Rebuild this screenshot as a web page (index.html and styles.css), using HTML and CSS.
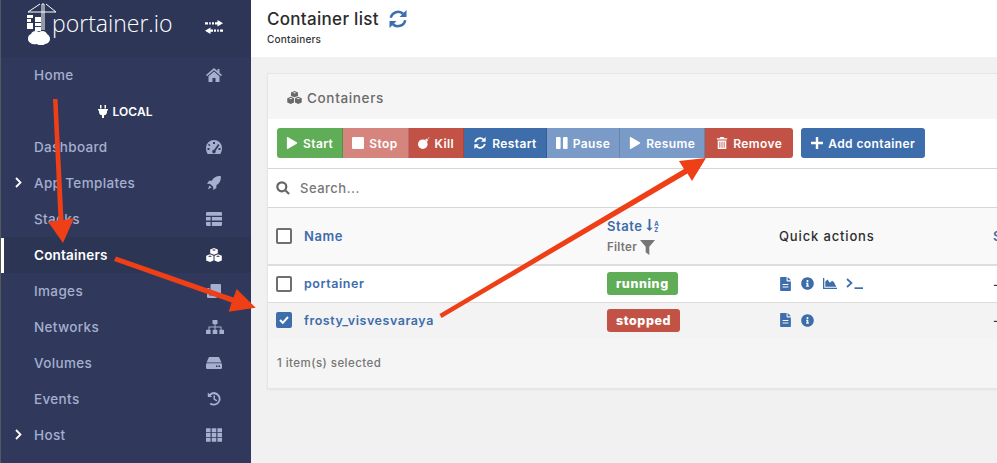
FILE: index.html
```html
<!DOCTYPE html>
<html lang="en">
<head>
<meta charset="utf-8">
<title>Container list</title>
<link rel="stylesheet" href="styles.css">
</head>
<body>
<svg class="defs" width="0" height="0" aria-hidden="true">
  <symbol id="i-home" viewBox="0 0 16 14"><path d="M8 0 0 7l1 1.2 7-5.9 7 5.9L16 7l-2.5-2.2V1h-2v2.1z"/><path d="M8 3.6 2.5 8.2V14h4v-4h3v4h4V8.2z"/></symbol>
  <symbol id="i-gauge" viewBox="0 0 16 14"><path fill-rule="evenodd" d="M8 0a8 8 0 0 0-8 8c0 2.300.7 4.400 1.700 6h12.600c1-1.600 1.700-3.700 1.700-6a8 8 0 0 0-8-8zM7 2h2v2H7zM3 3.800l1.400 1.400-1 1L2 4.800zM12.200 4l1.300 1L9.600 10.800a1.800 1.800 0 1 1-1.500-1zM1.500 8h2v2h-2zM12.500 8h2v2h-2z"/></symbol>
  <symbol id="i-rocket" viewBox="0 0 16 16"><path d="M15.800.2c-4.500-.5-8 1.200-10.300 5.100H2.400L0 8.800l3.600.2 3.400 3.400.2 3.600 3.500-2.400v-3.100C14.600 8.200 16.300 4.700 15.800.2z"/><path d="M2.800 10.800 1 15l4.200-1.800z"/></symbol>
  <symbol id="i-table" viewBox="0 0 15 13"><path d="M1 0h13a1 1 0 0 1 1 1v2.500H0V1a1 1 0 0 1 1-1zM0 4.700h4.300v3.300H0zM5.500 4.700H15v3.300H5.500zM0 9.200h4.300V13H1a1 1 0 0 1-1-1zM5.500 9.200H15V12a1 1 0 0 1-1 1H5.500z"/></symbol>
  <symbol id="i-cubes" viewBox="0 0 16 14"><path fill-rule="evenodd" d="M8 0l3.800 1.500v3.800L8 6.800 4.200 5.300V1.500zM8 1.300 6 2l2 .8 2-.8zM4 6.300l3.500 1.400v4.800L4 14 .2 12.500V7.700zM4 7.500l-2 .7 2 .8 2-.8zM12 6.300l3.800 1.400v4.800L12 14l-3.500-1.500V7.700zM12 7.500l-2 .7 2 .8 2-.8z"/></symbol>
  <symbol id="i-clone" viewBox="0 0 14 14"><rect x="3.500" y="0" width="10.500" height="10.500" rx="1"/><path d="M0 5a1 1 0 0 1 1-1h1.500v7.500H10V13a1 1 0 0 1-1 1H1a1 1 0 0 1-1-1z"/></symbol>
  <symbol id="i-sitemap" viewBox="0 0 18 14"><rect x="6.500" y="0" width="5" height="4.200" rx=".6"/><path d="M8.500 4h1v2.500h6V10h-1V7.500h-5V10h-1V7.500h-5V10h-1V6.500h6z"/><rect x="0" y="9.800" width="4.600" height="4.200" rx=".6"/><rect x="6.700" y="9.800" width="4.600" height="4.200" rx=".6"/><rect x="13.400" y="9.800" width="4.600" height="4.200" rx=".6"/></symbol>
  <symbol id="i-hdd" viewBox="0 0 16 12"><path d="M3 0h10l2.500 5.500h-15z"/><path fill-rule="evenodd" d="M1.200 6.300h13.600A1.200 1.200 0 0 1 16 7.500v3.300a1.200 1.200 0 0 1-1.200 1.200H1.200A1.200 1.200 0 0 1 0 10.800V7.500a1.200 1.200 0 0 1 1.200-1.200zM10 8.400h1.500v1.500H10zM12.500 8.400H14v1.500h-1.500z"/></symbol>
  <symbol id="i-history" viewBox="0 0 14 14"><path d="M7.300 0A6.800 6.800 0 0 0 2.400 2.100L.8.600V5h4.400L3.700 3.500a4.800 4.800 0 1 1 .1 7.200l-1.200 1.500A6.800 6.800 0 1 0 7.300 0z"/><path d="M6.500 3.500H8v3.300l2.300 1.400-.8 1.200-3-1.800z"/></symbol>
  <symbol id="i-grid" viewBox="0 0 14 12"><path d="M0 0h4v3.500H0zM5 0h4v3.500H5zM10 0h4v3.500h-4zM0 4.300h4v3.500H0zM5 4.300h4v3.500H5zM10 4.300h4v3.500h-4zM0 8.500h4V12H0zM5 8.500h4V12H5zM10 8.500h4V12h-4z"/></symbol>
  <symbol id="i-plug" viewBox="0 0 10 13"><path d="M2 0h1.500v3.500H2zM6.500 0H8v3.500H6.500zM0 4h10v1.500H9V7a3.400 3.400 0 0 1-3 3.300V13H4v-2.700A3.400 3.400 0 0 1 1 7V5.500H0z"/></symbol>
  <symbol id="i-swap" viewBox="0 0 18 14"><path d="M12.500 0 18 3.300l-5.500 3.200V4.400H10V2.300h2.500zM0 2.300h3v2.100H0zM4.200 2.300h1.600v2.100H4.200zM7 2.300h2v2.100H7z"/><path d="M5.500 7.500v2.100H8v2.100H5.500V14L0 10.700zM9 9.600h2v2.100H9zM12.200 9.600h1.600v2.100h-1.600zM15 9.600h3v2.100h-3z"/></symbol>
  <symbol id="i-refresh" viewBox="0 0 18 18"><path fill="none" stroke="currentColor" stroke-width="2.600" d="M1.800 7.800A7.400 7.400 0 0 1 14.300 4M16.200 10.200A7.400 7.400 0 0 1 3.700 14"/><path d="M17.500 0v7h-7zM.5 18v-7h7z"/></symbol>
  <symbol id="i-play" viewBox="0 0 12 14"><path d="M0 1v12a1 1 0 0 0 1.500.8l10-6a1 1 0 0 0 0-1.600l-10-6A1 1 0 0 0 0 1z"/></symbol>
  <symbol id="i-stop" viewBox="0 0 12 12"><rect width="12" height="12" rx="1.200"/></symbol>
  <symbol id="i-pause" viewBox="0 0 12 12"><rect width="4.600" height="12" rx="1"/><rect x="7" width="4.600" height="12" rx="1"/></symbol>
  <symbol id="i-bomb" viewBox="0 0 14 14"><circle cx="5.600" cy="8.400" r="5.600"/><path d="m8.500 3.300 1.500-1.500 2 2-1.500 1.500z"/><path d="M11.500 1.500 12.800.2l.6.6-1.300 1.300z"/></symbol>
  <symbol id="i-trash" viewBox="0 0 12 14"><path fill-rule="evenodd" d="M4 0h4l.7 1.500H12V3H0V1.500h3.300zM1 4h10v9a1 1 0 0 1-1 1H2a1 1 0 0 1-1-1zM3 5.500V12.500h1V5.500zM5.500 5.500V12.500h1V5.500zM8 5.500V12.500h1V5.500z"/></symbol>
  <symbol id="i-plus" viewBox="0 0 12 12"><path d="M4.800 0h2.400v4.800H12v2.400H7.200V12H4.800V7.200H0V4.800h4.800z"/></symbol>
  <symbol id="i-search" viewBox="0 0 14 14"><circle cx="5.800" cy="5.800" r="4.500" fill="none" stroke="currentColor" stroke-width="2.200"/><path d="m8.800 10.300 1.500-1.500 3.500 3.500-1.500 1.500z"/></symbol>
  <symbol id="i-down" viewBox="0 0 7 13"><path d="M2.500 0h2v9.500H7L3.500 13 0 9.500h2.500z"/></symbol>
  <symbol id="i-filter" viewBox="0 0 14 14"><path d="M0 0h14L8.700 6.300V14L5.300 11.500V6.300z"/></symbol>
  <symbol id="i-file" viewBox="0 0 10 13"><path fill-rule="evenodd" d="M0 .6A.6.600 0 0 1 .6 0H6v3.500a.6.600 0 0 0 .6.600H10v8.300a.6.600 0 0 1-.6.600H.6a.6.600 0 0 1-.6-.6zM2.300 6.500v1h5.400v-1zM2.300 8.800v1h5.400v-1z"/><path d="M7 0l3 3H7z"/></symbol>
  <symbol id="i-info" viewBox="0 0 512 512"><path d="M256 8C119 8 8 119.100 8 256c0 137 111 248 248 248s248-111 248-248C504 119.100 393 8 256 8zm0 110c23.200 0 42 18.800 42 42s-18.800 42-42 42-42-18.800-42-42 18.800-42 42-42zm56 254c0 6.600-5.400 12-12 12h-88c-6.600 0-12-5.400-12-12v-24c0-6.600 5.400-12 12-12h12v-64h-12c-6.600 0-12-5.400-12-12v-24c0-6.600 5.400-12 12-12h64c6.600 0 12 5.400 12 12v100h12c6.600 0 12 5.400 12 12v24z"/></symbol>
  <symbol id="i-area" viewBox="0 0 14 11"><path d="M0 0h1.300v9.700H14V11H0z"/><path d="M2.300 8.800V3.500L4.500 1.500l2.300 3.300 2.400-2 1.800 1.500 2.300 4.500z"/></symbol>
  <symbol id="i-term" viewBox="0 0 17 11"><path fill="none" stroke="currentColor" stroke-width="1.700" d="m1 1 4.500 4L1 9"/><path d="M8.500 9.300H17V11H8.500z"/></symbol>
  <symbol id="i-check" viewBox="0 0 10 8"><path fill="none" stroke="currentColor" stroke-width="2" d="m1 4 2.800 2.800L9 1"/></symbol>
  <symbol id="i-chev" viewBox="0 0 7 11"><path fill="none" stroke="currentColor" stroke-width="1.800" d="m1 1 4.500 4.500L1 10"/></symbol>
</svg>

<div class="app">
  <aside class="sidebar">
    <div class="brand">
      <svg class="brand-mark" viewBox="0 0 30 42">
        <path fill="none" stroke="#fff" stroke-width="1" d="M16 1v26M18 1v26M14 1 2 9M20 1l10 8M2 9h28M16 1h2"/>
        <path fill="#fff" d="M9 14h6v5H9zM1 12h6v3H1zM1 16h4v3H1zM9 20h6v3H9zM1 20h6v6H1zM9 24h6v4H9z"/>
        <path fill="#fff" d="M5 31c1-3 5-4 8-2 3-2 7-1 8 2 2 1 3 3 3 5s-2 5-5 5c-2 2-6 2-8 0-4 1-9-1-9-5 0-3 1-4 3-5z"/>
      </svg>
      <span class="brand-name">portainer.io</span>
      <svg class="icon swap"><use href="#i-swap"/></svg>
    </div>
    <nav class="nav">
      <a class="nav-item"><span>Home</span><svg class="icon nav-icon home"><use href="#i-home"/></svg></a>
      <div class="nav-env"><svg class="icon plug"><use href="#i-plug"/></svg>LOCAL</div>
      <a class="nav-item"><span>Dashboard</span><svg class="icon nav-icon"><use href="#i-gauge"/></svg></a>
      <a class="nav-item"><svg class="icon chev"><use href="#i-chev"/></svg><span>App Templates</span><svg class="icon nav-icon"><use href="#i-rocket"/></svg></a>
      <a class="nav-item"><span>Stacks</span><svg class="icon nav-icon"><use href="#i-table"/></svg></a>
      <a class="nav-item active"><span>Containers</span><svg class="icon nav-icon"><use href="#i-cubes"/></svg></a>
      <a class="nav-item"><span>Images</span><svg class="icon nav-icon"><use href="#i-clone"/></svg></a>
      <a class="nav-item"><span>Networks</span><svg class="icon nav-icon wide"><use href="#i-sitemap"/></svg></a>
      <a class="nav-item"><span>Volumes</span><svg class="icon nav-icon"><use href="#i-hdd"/></svg></a>
      <a class="nav-item"><span>Events</span><svg class="icon nav-icon"><use href="#i-history"/></svg></a>
      <a class="nav-item"><svg class="icon chev"><use href="#i-chev"/></svg><span>Host</span><svg class="icon nav-icon"><use href="#i-grid"/></svg></a>
    </nav>
  </aside>

  <main class="main">
    <header class="page-head">
      <div class="page-title">Container list <svg class="icon refresh"><use href="#i-refresh"/></svg></div>
      <div class="crumb">Containers</div>
    </header>
    <section class="content">
      <div class="card">
        <div class="card-title"><svg class="icon title-icon"><use href="#i-cubes"/></svg>Containers</div>
        <div class="toolbar">
          <div class="btn-group">
            <button class="btn green"><svg class="icon bi"><use href="#i-play"/></svg>Start</button>
            <button class="btn light-red btn-stop"><svg class="icon bi"><use href="#i-stop"/></svg>Stop</button>
            <button class="btn red"><svg class="icon bi"><use href="#i-bomb"/></svg>Kill</button>
            <button class="btn blue btn-restart"><svg class="icon bi"><use href="#i-refresh"/></svg>Restart</button>
            <button class="btn light-blue"><svg class="icon bi"><use href="#i-pause"/></svg>Pause</button>
            <button class="btn light-blue"><svg class="icon bi"><use href="#i-play"/></svg>Resume</button>
            <button class="btn red btn-remove"><svg class="icon bi"><use href="#i-trash"/></svg>Remove</button>
          </div>
          <button class="btn blue solo"><svg class="icon bi"><use href="#i-plus"/></svg>Add container</button>
        </div>
        <div class="search"><svg class="icon search-icon"><use href="#i-search"/></svg>Search...</div>
        <div class="row head">
          <span class="check"></span>
          <span class="link strong">Name</span>
          <div class="state-col">
            <span class="link strong">State <svg class="icon sort"><use href="#i-down"/></svg><span class="az"><span>A</span><span>Z</span></span></span>
            <span class="filter">Filter <svg class="icon funnel"><use href="#i-filter"/></svg></span>
          </div>
          <span class="strong dark">Quick actions</span>
          <span class="link strong">S</span>
        </div>
        <div class="row item">
          <span class="check"></span>
          <span class="link">portainer</span>
          <span><span class="badge ok">running</span></span>
          <span class="actions">
            <svg class="icon a-file"><use href="#i-file"/></svg>
            <svg class="icon a-info"><use href="#i-info"/></svg>
            <svg class="icon a-area"><use href="#i-area"/></svg>
            <svg class="icon a-term"><use href="#i-term"/></svg>
          </span>
          <span class="dash">-</span>
        </div>
        <div class="row item selected">
          <span class="check on"><svg class="icon tick"><use href="#i-check"/></svg></span>
          <span class="link">frosty_visvesvaraya</span>
          <span><span class="badge bad">stopped</span></span>
          <span class="actions">
            <svg class="icon a-file"><use href="#i-file"/></svg>
            <svg class="icon a-info"><use href="#i-info"/></svg>
          </span>
          <span class="dash">-</span>
        </div>
        <div class="card-foot">1 item(s) selected</div>
      </div>
    </section>
  </main>
</div>

<svg class="arrows" viewBox="0 0 997 463" aria-hidden="true">
  <path d="M53 99h4.500L63.500 220 74 218 63 243 48 221.700 58.500 220.500z"/>
  <path d="M116 256.500 233.500 297.500 236.700 289 255.700 307.700 228.700 311.700 231.500 302.500 114 261z"/>
  <path d="M439.500 314 684 169 679 161 706 158 692 181 687.500 173.500 441.500 318z"/>
</svg>
</body>
</html>
```
FILE: styles.css
```css
* { box-sizing: border-box; }
html, body { margin: 0; height: 100%; overflow: hidden; }
body {
  position: relative;
  font-family: Inter, "Noto Sans", "Liberation Sans", sans-serif;
  font-size: 13px;
  color: #333;
  background: #f1f1f1;
}
.defs { position: absolute; }
.icon { display: inline-block; fill: currentColor; flex: none; }

.app { display: flex; height: 463px; }

.sidebar {
  width: 251px;
  flex: none;
  background: #30395b;
  border-left: 1px solid #55585f;
  color: #a5afd0;
  overflow: hidden;
}
.brand {
  height: 57px;
  background: #2d3657;
  display: flex;
  align-items: flex-start;
  padding: 3px 0 0 25px;
}
.brand-mark { width: 30px; height: 42px; flex: none; }
.brand-name {
  color: #fff;
  font-family: "Open Sans", sans-serif;
  font-weight: 300;
  font-size: 23px;
  line-height: 26px;
  margin: 7px 0 0 -4px;
  width: 153px;
}
.swap { width: 18px; height: 14px; color: #fff; margin-top: 17px; }

.nav-item {
  height: 36px;
  display: flex;
  align-items: center;
  padding-left: 33px;
  position: relative;
  font-size: 13.5px;
  font-weight: 500;
  letter-spacing: .35px;
}
.nav-icon { width: 16px; height: 14px; position: absolute; left: 205px; top: 11px; }
.nav-icon.wide { width: 18px; left: 205px; }
.chev { width: 7px; height: 11px; color: #fff; position: absolute; left: 14px; top: 12px; }
.nav-env {
  height: 36px;
  display: flex;
  align-items: center;
  justify-content: center;
  gap: 4px;
  color: #fff;
  font-size: 12px;
  font-weight: 600;
  letter-spacing: .1px;
  padding-right: 1px;
}
.plug { width: 10px; height: 13px; }
.active { color: #fff; background: #2c3554; font-weight: 600; letter-spacing: .2px; }
.active::before {
  content: "";
  position: absolute;
  left: 0;
  top: 1px;
  bottom: 0;
  width: 3px;
  background: #fff;
}

.main { flex: 1; min-width: 0; display: flex; flex-direction: column; }
.page-head { height: 57px; background: #fff; padding: 9px 0 0 16px; }
.page-title {
  display: flex;
  align-items: center;
  gap: 10px;
  font-size: 17px;
  font-weight: 500;
  line-height: 20px;
  letter-spacing: .3px;
  color: #2b2b2b;
}
.refresh { width: 18px; height: 18px; color: #3d6fb0; }
.crumb { font-size: 10px; font-weight: 500; line-height: 14px; margin-top: 3px; letter-spacing: .2px; color: #333; }

.content { padding: 16px 0 0 16px; overflow: hidden; flex: 1; }
.card {
  width: 760px;
  height: 316px;
  background: #f5f5f5;
  border: 1px solid #e6e6e6;
  border-right: 0;
  box-shadow: 0 1px 2px rgba(0,0,0,.06);
}
.card-title {
  height: 45px;
  display: flex;
  align-items: center;
  padding: 2px 0 0 19px;
  gap: 5px;
  font-size: 13.5px;
  font-weight: 500;
  letter-spacing: .65px;
  color: #6a6a6a;
  background: #f5f5f5;
}
.title-icon { width: 15px; height: 13px; }

.toolbar {
  height: 50px;
  background: #fff;
  display: flex;
  padding: 9px 0 0 9px;
  gap: 8px;
  border-bottom: 1px solid #d6d6d6;
}
.btn-group { display: flex; height: 30px; }
.btn {
  height: 30px;
  border: 0;
  border-right: 1px solid rgba(0,0,0,.14);
  padding: 0 9px;
  display: flex;
  align-items: center;
  gap: 5px;
  color: #fff;
  font: 600 12px Inter, "Noto Sans", sans-serif;
  letter-spacing: .4px;
}
.btn:first-child { border-radius: 3px 0 0 3px; }
.btn:last-child { border-radius: 0 3px 3px 0; border-right: 0; padding-right: 11px; }
.btn.btn-stop { padding-right: 10px; }
.btn-restart .bi { width: 14px; }
.btn.btn-remove { padding-left: 11px; }
.btn.solo { border-radius: 3px; border: 0; padding: 0 10px; }
.green { background: #5fad56; }
.light-red { background: #d6847e; }
.red { background: #c35246; }
.blue { background: #3e6dab; }
.light-blue { background: #7a9bc7; }
.bi { width: 12px; height: 12px; }

.search {
  height: 39px;
  background: #fff;
  display: flex;
  align-items: center;
  gap: 10px;
  padding-left: 8px;
  color: #777;
  font-size: 13px;
  font-weight: 500;
  letter-spacing: .5px;
  border-bottom: 1px solid #d6d6d6;
}
.search-icon { width: 14px; height: 14px; color: #666; }

.row {
  display: grid;
  grid-template-columns: 36px 303px 172px 214px 1fr;
  align-items: center;
}
.head { height: 58px; background: #f9f9f9; border-bottom: 2px solid #ddd; }
.item { height: 37px; background: #fff; border-bottom: 1px solid #ddd; padding-bottom: 1px; }
.item.selected { height: 35px; background: #f3f3f3; border: 0; }
.check {
  width: 16px;
  height: 16px;
  margin-left: 8px;
  border: 2px solid #6f6f6f;
  border-radius: 2px;
  background: #fff;
  display: flex;
  align-items: center;
  justify-content: center;
}
.check.on { background: #3e6dab; border-color: #3e6dab; }
.tick { width: 10px; height: 8px; color: #fff; }
.link { color: #3e6dab; font-weight: 600; font-size: 12.5px; letter-spacing: .55px; }
.strong { font-weight: 600; font-size: 13px; }
.dark { color: #2e2e2e; font-weight: 500; letter-spacing: .85px; }
.state-col { display: flex; flex-direction: column; gap: 6px; }
.sort { width: 7px; height: 12px; }
.az { display: inline-flex; flex-direction: column; font-size: 6px; line-height: 6px; font-weight: 700; vertical-align: middle; margin-left: 1px; letter-spacing: 0; }
.filter { color: #767676; font-size: 11.5px; font-weight: 600; letter-spacing: .3px; display: flex; align-items: center; gap: 3px; }
.funnel { width: 15px; height: 15px; }
.badge {
  display: inline-block;
  padding: 0 9px;
  height: 23px;
  line-height: 23px;
  border-radius: 3px;
  color: #fff;
  font-size: 12.5px;
  font-weight: 800;
  letter-spacing: .6px;
}
.ok { background: #5fad56; }
.bad { background: #c35246; }
.actions { display: flex; align-items: center; color: #3e6dab; padding-left: 1px; }
.a-file { width: 11px; height: 14px; margin-right: 10px; }
.a-info { width: 13px; height: 13px; margin-right: 9px; }
.a-area { width: 14px; height: 11px; margin-right: 9px; }
.a-term { width: 17px; height: 11px; }
.dash { color: #333; font-weight: 500; }
.card-foot {
  padding: 18px 0 0 9px;
  font-size: 11.500px;
  font-weight: 500;
  letter-spacing: .45px;
  color: #757575;
}

.arrows {
  position: absolute;
  left: 0;
  top: 0;
  width: 997px;
  height: 463px;
  fill: #ee3f17;
  pointer-events: none;
}
```
